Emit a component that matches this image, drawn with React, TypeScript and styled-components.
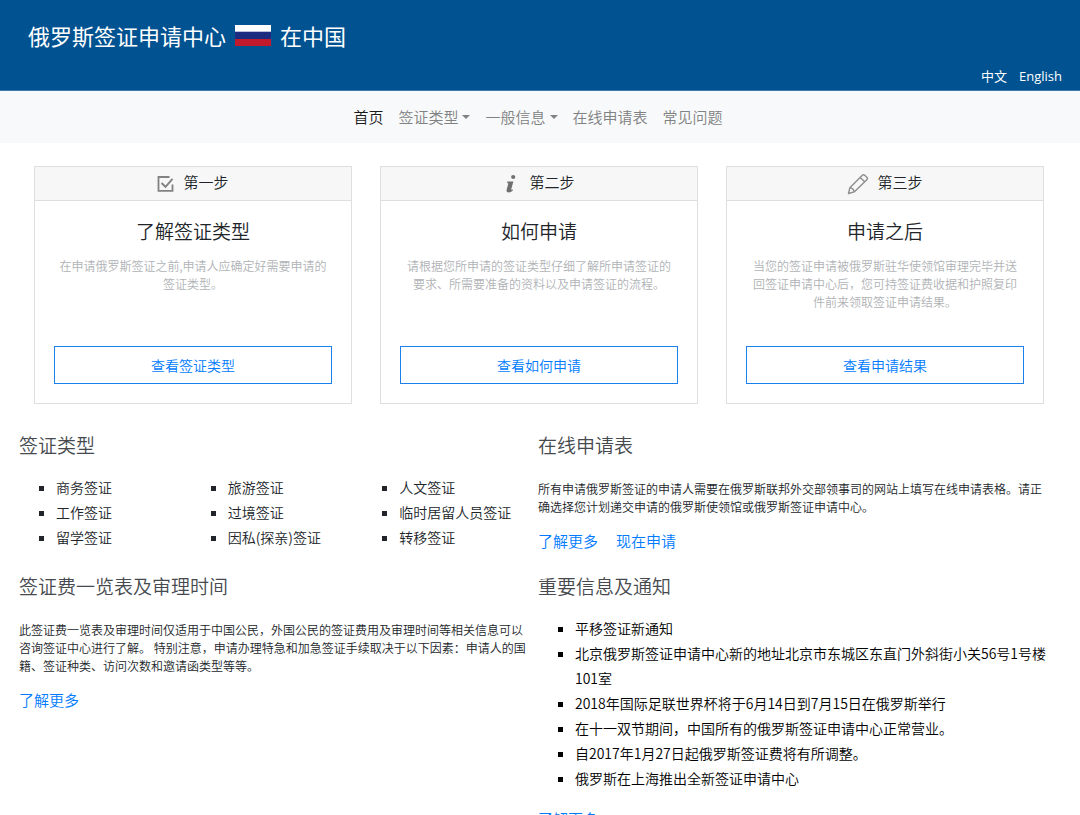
import React from "react";
import styled, { createGlobalStyle } from "styled-components";

const GlobalStyle = createGlobalStyle`
  *, *::before, *::after { box-sizing: border-box; }
  body {
    margin: 0;
    background: #fff;
    color: #212529;
    font-family: "Noto Sans CJK SC", "Open Sans", sans-serif;
    font-size: 15px;
    font-weight: 350;
    line-height: 24px;
  }
  h1, h2, h3, p, ul { margin: 0; padding: 0; font-weight: inherit; }
`;

const Header = styled.header`
  display: flex;
  flex-direction: column;
  justify-content: space-between;
  height: 91px;
  padding: 20px 18px 2px 28px;
  background: #005291;
  border-bottom: 1px solid #3f7dad;
  color: #fff;
`;

const Brand = styled.h1`
  display: flex;
  align-items: center;
  gap: 9px;
  font-size: 22px;
  font-weight: 400;
  line-height: 30px;
`;

const Flag = styled.svg`
  display: block;
  width: 36px;
  height: 21px;
`;

const Languages = styled.div`
  display: flex;
  justify-content: flex-end;
  gap: 12px;
  font-family: "Open Sans", "Noto Sans CJK SC", sans-serif;
  font-size: 13px;
  font-weight: 400;
`;

const LanguageLink = styled.a`
  color: #fff;
  text-decoration: none;
`;

const Nav = styled.nav`
  display: flex;
  justify-content: center;
  gap: 15px;
  padding: 14px 4px 14px 0;
  background: #f8f9fa;
`;

const NavLink = styled.a<{ $active?: boolean }>`
  display: flex;
  align-items: center;
  gap: 4px;
  color: ${(p) => (p.$active ? "#1a1a1a" : "#808182")};
  text-decoration: none;
`;

const Caret = styled.span`
  border: 4px solid transparent;
  border-top-color: currentColor;
  border-bottom: 0;
`;

const Steps = styled.section`
  display: grid;
  grid-template-columns: repeat(3, 1fr);
  gap: 28px;
  padding: 23px 36px 0 34px;
`;

const Card = styled.article`
  display: flex;
  flex-direction: column;
  height: 238px;
  border: 1px solid #dfdfdf;
  text-align: center;
`;

const CardHeader = styled.div`
  display: flex;
  align-items: center;
  justify-content: center;
  gap: 8px;
  height: 34px;
  padding-bottom: 4px;
  background: #f7f7f7;
  border-bottom: 1px solid #dfdfdf;

  svg {
    display: block;
    margin-top: 4px;
  }
`;

const CardBody = styled.div`
  display: flex;
  flex: 1;
  flex-direction: column;
  padding: 18px 19px 19px;
`;

const CardTitle = styled.h2`
  font-size: 19px;
  line-height: 24px;
`;

const CardText = styled.p`
  flex: 1;
  padding: 14px 4px 0;
  color: #b0b3b6;
  font-size: 12px;
  line-height: 18px;
`;

const CardButton = styled.button`
  height: 38px;
  border: 1px solid #1a82e8;
  background: #fff;
  color: #007bff;
  font-family: inherit;
  font-size: 14px;
  font-weight: inherit;
  cursor: pointer;
`;

const Sections = styled.main`
  display: grid;
  grid-template-columns: repeat(2, 1fr);
  gap: 21px 4px;
  padding: 29px 27px 0 19px;
`;

const SectionTitle = styled.h3`
  margin-bottom: 18px;
  color: #464a4e;
  font-size: 19px;
  line-height: 24px;
`;

const Paragraph = styled.p`
  padding-top: 5px;
  font-size: 12px;
  line-height: 18px;
`;

const Links = styled.div`
  display: flex;
  gap: 18px;
  margin-top: 13px;
`;

const TextLink = styled.a`
  color: #007bff;
  text-decoration: none;
`;

const Columns = styled.div`
  display: grid;
  grid-template-columns: repeat(3, 1fr);
`;

const List = styled.ul<{ $dark?: boolean }>`
  padding: 0 0 3px 37px;
  color: ${(p) => (p.$dark ? "#000" : "inherit")};
  font-size: 14px;
  line-height: 25px;
  list-style: square;
  white-space: ${(p) => (p.$dark ? "normal" : "nowrap")};
`;

const CheckIcon = () => (
  <svg width="18" height="18" viewBox="0 0 18 18" fill="none" stroke="#828282" strokeWidth="1.8">
    <path d="M12.5 2H1.5v13.8h14V9.5" />
    <path d="M4.5 8l4 3.8L15.5 3.8" strokeWidth="1.9" />
  </svg>
);

const InfoIcon = () => (
  <svg width="18" height="20" viewBox="0 0 18 20" fill="#707070">
    <circle cx="10.2" cy="3" r="2.1" />
    <path d="M4.3 7.4h6.1L8.3 15.1c-.2.9.5 1 1.7.2l-.2 1.3c-1.3 1.2-2.6 1.9-4 1.9-1.8 0-2.6-1-2.2-2.7l1.6-5.9c.2-.8-.2-1-1-1z" />
  </svg>
);

const PencilIcon = () => (
  <svg width="22" height="22" viewBox="0 0 22 22" fill="none" stroke="#8e8e8e" strokeWidth="1.4" strokeLinejoin="round">
    <path d="M1.5 20.5l1.4-5.8L15.3 2.3c.8-.8 1.7-.8 2.5 0l2 1.9c.8.8.8 1.7 0 2.5L7.2 18.9z" />
    <path d="M2.9 14.7c2.4.3 3.800 1.600 4.300 4.200M13.200 4.400l4.500 4.400" />
  </svg>
);

const steps = [
  {
    icon: <CheckIcon />,
    step: "第一步",
    title: "了解签证类型",
    text: "在申请俄罗斯签证之前,申请人应确定好需要申请的签证类型。",
    action: "查看签证类型",
  },
  {
    icon: <InfoIcon />,
    step: "第二步",
    title: "如何申请",
    text: "请根据您所申请的签证类型仔细了解所申请签证的要求、所需要准备的资料以及申请签证的流程。",
    action: "查看如何申请",
  },
  {
    icon: <PencilIcon />,
    step: "第三步",
    title: "申请之后",
    text: "当您的签证申请被俄罗斯驻华使领馆审理完毕并送回签证申请中心后，您可持签证费收据和护照复印件前来领取签证申请结果。",
    action: "查看申请结果",
  },
];

const visaTypes = [
  ["商务签证", "工作签证", "留学签证"],
  ["旅游签证", "过境签证", "因私(探亲)签证"],
  ["人文签证", "临时居留人员签证", "转移签证"],
];

const notices = [
  "平移签证新通知",
  "北京俄罗斯签证申请中心新的地址北京市东城区东直门外斜街小关56号1号楼101室",
  "2018年国际足联世界杯将于6月14日到7月15日在俄罗斯举行",
  "在十一双节期间，中国所有的俄罗斯签证申请中心正常营业。",
  "自2017年1月27日起俄罗斯签证费将有所调整。",
  "俄罗斯在上海推出全新签证申请中心",
];

const navItems = [
  { label: "首页", active: true },
  { label: "签证类型", menu: true },
  { label: "一般信息", menu: true },
  { label: "在线申请表" },
  { label: "常见问题" },
];

export default function App() {
  return (
    <>
      <GlobalStyle />
      <Header>
        <Brand>
          <span>俄罗斯签证申请中心</span>
          <Flag viewBox="0 0 36 21" role="img" aria-label="俄罗斯国旗">
            <rect width="36" height="7" fill="#fff" />
            <rect y="7" width="36" height="7" fill="#1c2a80" />
            <rect y="6" width="36" height="1" fill="#b9bddb" />
            <rect y="14" width="36" height="7" fill="#c01a2c" />
          </Flag>
          <span>在中国</span>
        </Brand>
        <Languages>
          <LanguageLink href="#zh">中文</LanguageLink>
          <LanguageLink href="#en">English</LanguageLink>
        </Languages>
      </Header>
      <Nav>
        {navItems.map((item) => (
          <NavLink key={item.label} href="#" $active={item.active}>
            {item.label}
            {item.menu && <Caret />}
          </NavLink>
        ))}
      </Nav>
      <Steps>
        {steps.map((s) => (
          <Card key={s.step}>
            <CardHeader>
              {s.icon}
              <span>{s.step}</span>
            </CardHeader>
            <CardBody>
              <CardTitle>{s.title}</CardTitle>
              <CardText>{s.text}</CardText>
              <CardButton type="button">{s.action}</CardButton>
            </CardBody>
          </Card>
        ))}
      </Steps>
      <Sections>
        <section>
          <SectionTitle>签证类型</SectionTitle>
          <Columns>
            {visaTypes.map((column) => (
              <List key={column[0]}>
                {column.map((type) => (
                  <li key={type}>{type}</li>
                ))}
              </List>
            ))}
          </Columns>
        </section>
        <section>
          <SectionTitle>在线申请表</SectionTitle>
          <Paragraph>
            所有申请俄罗斯签证的申请人需要在俄罗斯联邦外交部领事司的网站上填写在线申请表格。请正确选择您计划递交申请的俄罗斯使领馆或俄罗斯签证申请中心。
          </Paragraph>
          <Links>
            <TextLink href="#more">了解更多</TextLink>
            <TextLink href="#apply">现在申请</TextLink>
          </Links>
        </section>
        <section>
          <SectionTitle>签证费一览表及审理时间</SectionTitle>
          <Paragraph>
            此签证费一览表及审理时间仅适用于中国公民，外国公民的签证费用及审理时间等相关信息可以咨询签证中心进行了解。 特别注意，申请办理特急和加急签证手续取决于以下因素：申请人的国籍、签证种类、访问次数和邀请函类型等等。
          </Paragraph>
          <Links>
            <TextLink href="#fees">了解更多</TextLink>
          </Links>
        </section>
        <section>
          <SectionTitle>重要信息及通知</SectionTitle>
          <List $dark>
            {notices.map((notice) => (
              <li key={notice}>{notice}</li>
            ))}
          </List>
          <Links>
            <TextLink href="#notices">了解更多</TextLink>
          </Links>
        </section>
      </Sections>
    </>
  );
}
